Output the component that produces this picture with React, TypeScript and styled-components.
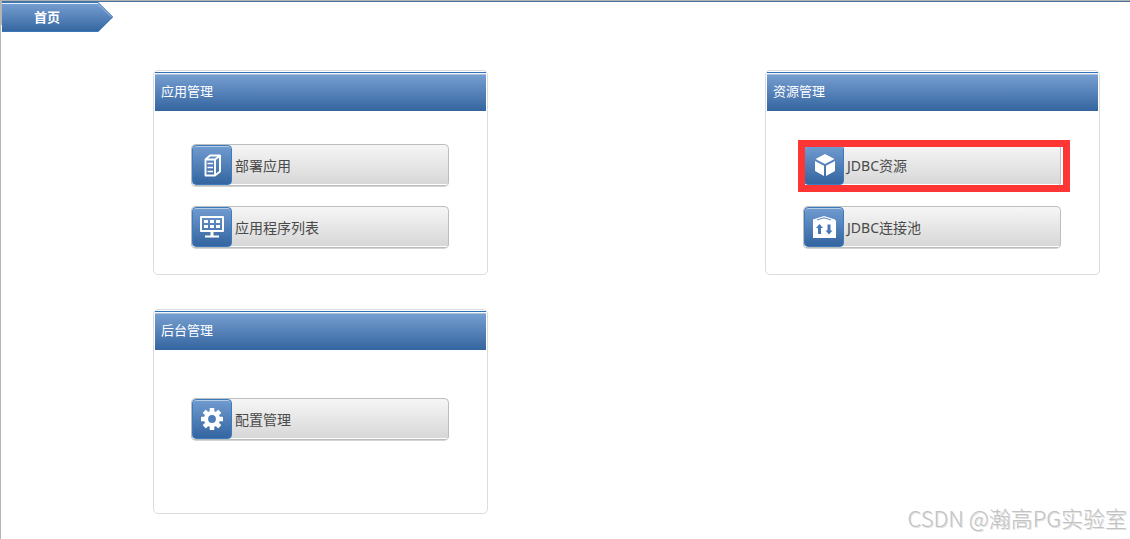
import React from "react";
import styled, { createGlobalStyle } from "styled-components";

const GlobalStyle = createGlobalStyle`
  body {
    margin: 0;
    background-color: #ffffff;
    font-family: "Noto Sans", "Noto Sans CJK SC", sans-serif;
  }
`;

const Page = styled.div`
  position: relative;
  box-sizing: border-box;
  width: 100%;
  height: 539px;
  overflow: hidden;
  border-top: 1px solid #b0b2b2;
  border-left: 1px solid #b4b6b6;
  box-shadow: inset 0 1px 0 #47719f;
`;

const Crumb = styled.div`
  position: relative;
  width: 113px;
  height: 31px;
  svg {
    display: block;
  }
`;

const CrumbLabel = styled.span`
  position: absolute;
  left: 33px;
  top: 1px;
  line-height: 31px;
  font-size: 13px;
  font-weight: bold;
  color: #ffffff;
`;

const Board = styled.div`
  display: grid;
  grid-template-columns: 335px 335px;
  grid-auto-rows: 205px;
  column-gap: 277px;
  row-gap: 34px;
  margin: 38px 0 0 152px;
`;

const Panel = styled.section`
  box-sizing: border-box;
  border: 1px solid #dcdcdc;
  border-radius: 5px;
  padding: 1px;
`;

const PanelTitle = styled.h3`
  box-sizing: border-box;
  height: 39px;
  margin: 0;
  padding-left: 6px;
  border-top: 1px solid #2f71b5;
  box-shadow: inset 0 1px 0 #f4f8fc, inset 0 2px 0 #a9bfda;
  background: linear-gradient(#79a1d3, #34659f);
  color: #ffffff;
  font-size: 13px;
  font-weight: normal;
  line-height: 37px;
`;

const Menu = styled.div<{ $top: number }>`
  display: flex;
  flex-direction: column;
  gap: 19px;
  padding: ${(props) => props.$top}px 0 0 36px;
`;

const MenuButton = styled.a`
  position: relative;
  display: flex;
  box-sizing: border-box;
  width: 258px;
  height: 43px;
  padding-bottom: 1px;
  border: 1px solid #bbbebe;
  border-bottom: 1px solid #d2d3d3;
  border-radius: 5px;
  background: linear-gradient(#f6f6f6, #d7d7d7 39px, #ffffff 39px, #ffffff 40px, #b9bcbc 40px);
  color: #4a4a4a;
  font-size: 14px;
  line-height: 41px;
`;

const IconBox = styled.span`
  display: flex;
  align-items: center;
  justify-content: center;
  box-sizing: border-box;
  width: 40px;
  height: 40px;
  margin-right: 3px;
  border: 1px solid #3d7abe;
  border-radius: 4px;
  box-shadow: inset 0 1px 0 #b6cbe5;
  background: linear-gradient(#709bd0, #3465a0);
`;

const Marker = styled.span`
  position: absolute;
  left: -6px;
  top: -5px;
  box-sizing: border-box;
  width: 272px;
  height: 52px;
  border: 7px solid #fd3535;
`;

const Watermark = styled.div`
  position: absolute;
  right: 3px;
  bottom: 6px;
  color: #c2c2c2;
  font-family: "Noto Sans CJK SC", sans-serif;
  font-size: 22px;
  font-weight: 300;
  line-height: 32px;
  white-space: nowrap;
  text-shadow: 1px 1px 0 #e2e2e2;
`;

const ServerIcon = () => (
  <svg width="26" height="26" viewBox="0 0 26 26" fill="none" stroke="#fff" strokeWidth="2" strokeLinejoin="round">
    <path d="M6.5 7.5H16V23.5H6.5ZM6.5 7.5L11 3.5H21V19.5L16 23.5M16 7.5L21 3.5" strokeWidth="1.9" />
    <path d="M8.5 11.5H14M8.5 15.5H14M8.5 19.5H14" strokeWidth="1.7" />
  </svg>
);

const ListIcon = () => (
  <svg width="26" height="26" viewBox="0 0 26 26" fill="#fff">
    <path
      fillRule="evenodd"
      d="M2 2H24Q25 2 25 3V17Q25 18 24 18H14.5V21.5H20V23.5H6V21.5H11.5V18H2Q1 18 1 17V3Q1 2 2 2ZM3 4V16H23V4Z"
    />
    {[5, 11, 17].map((x) => (
      <g key={x}>
        <rect x={x} y="6" width="4" height="3" />
        <rect x={x} y="11" width="4" height="3" />
      </g>
    ))}
  </svg>
);

const CubeIcon = () => (
  <svg width="26" height="26" viewBox="0 0 26 26" fill="#fff">
    <path d="M14 2L23.5 7L14 12L4.5 7ZM4 9L13 13.8V24L4 19ZM24 9L15 13.8V24L24 19Z" />
  </svg>
);

const PoolIcon = () => (
  <svg width="26" height="26" viewBox="0 0 26 26">
    <path d="M2 5.5L13 2L24 5.5L25 7V24H2Z" fill="#fff" />
    <path d="M6 6L13 3.8L20 6" fill="none" stroke="#6390c6" strokeWidth="1.2" />
    <path d="M8.5 10L12 14H10V20H7V14H5ZM18 20.5L14.5 16.5H16.5V10.5H19.5V16.5H21.5Z" fill="#4778b4" />
  </svg>
);

const GearIcon = () => (
  <svg width="26" height="26" viewBox="0 0 26 26">
    <g fill="#fff">
      {[0, 45, 90, 135].map((angle) => (
        <rect key={angle} x="10.7" y="2" width="4.6" height="22" rx="0.6" transform={`rotate(${angle} 13 13)`} />
      ))}
      <circle cx="13" cy="13" r="8" />
    </g>
    <circle cx="13" cy="13" r="3.9" fill="#4e7eba" />
  </svg>
);

const panels = [
  {
    title: "应用管理",
    top: 33,
    items: [
      { label: "部署应用", icon: <ServerIcon /> },
      { label: "应用程序列表", icon: <ListIcon /> },
    ],
  },
  {
    title: "资源管理",
    top: 33,
    items: [
      { label: "JDBC资源", icon: <CubeIcon />, marked: true },
      { label: "JDBC连接池", icon: <PoolIcon /> },
    ],
  },
  {
    title: "后台管理",
    top: 48,
    items: [{ label: "配置管理", icon: <GearIcon /> }],
  },
];

export default function App() {
  return (
    <Page>
      <GlobalStyle />
      <Crumb>
        <svg width="113" height="31" viewBox="0 0 113 31">
          <defs>
            <linearGradient id="crumb" x1="0" y1="0" x2="0" y2="1">
              <stop offset="0" stopColor="#79a1d3" />
              <stop offset="1" stopColor="#34659f" />
            </linearGradient>
          </defs>
          <path d="M0 0H1V24H0Z" fill="#b4b6b6" />
          <path d="M1 1H97L112 16L97 31H1Z" fill="url(#crumb)" />
          <path d="M97 2.5L111 16" fill="none" stroke="#9dbbdf" strokeWidth="1.5" />
          <path d="M1 2.5H97" fill="none" stroke="#e6eef7" />
          <path d="M1 1.5H97L111.5 16M1 30.5H97L111.5 16" fill="none" stroke="#3a76ba" />
        </svg>
        <CrumbLabel>首页</CrumbLabel>
      </Crumb>
      <Board>
        {panels.map((panel) => (
          <Panel key={panel.title}>
            <PanelTitle>{panel.title}</PanelTitle>
            <Menu $top={panel.top}>
              {panel.items.map((item: any) => (
                <MenuButton key={item.label}>
                  <IconBox>{item.icon}</IconBox>
                  {item.label}
                  {item.marked && <Marker />}
                </MenuButton>
              ))}
            </Menu>
          </Panel>
        ))}
      </Board>
      <Watermark>CSDN @瀚高PG实验室</Watermark>
    </Page>
  );
}
